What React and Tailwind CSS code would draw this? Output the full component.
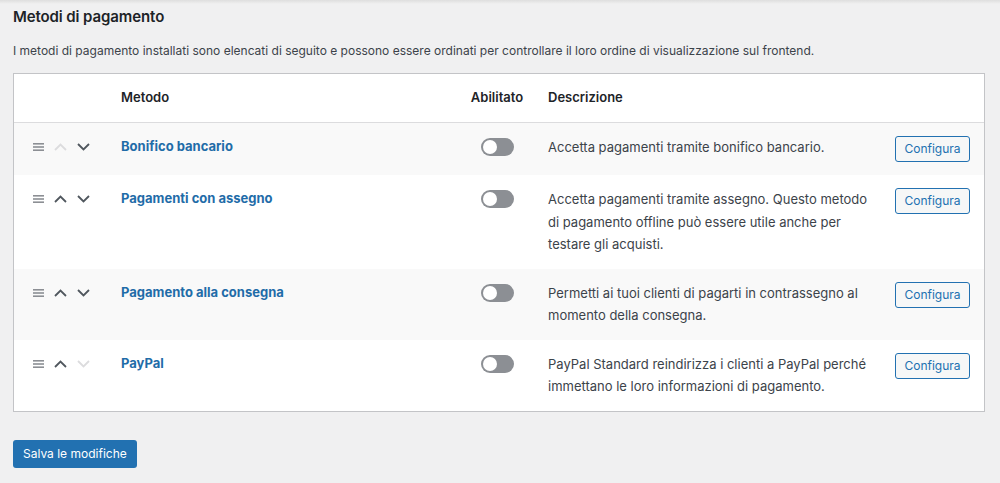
import React from 'react';

const methods = [
  {
    name: 'Bonifico bancario',
    desc: 'Accetta pagamenti tramite bonifico bancario.',
    up: false,
    down: true,
  },
  {
    name: 'Pagamenti con assegno',
    desc: 'Accetta pagamenti tramite assegno. Questo metodo di pagamento offline può essere utile anche per testare gli acquisti.',
    up: true,
    down: true,
  },
  {
    name: 'Pagamento alla consegna',
    desc: 'Permetti ai tuoi clienti di pagarti in contrassegno al momento della consegna.',
    up: true,
    down: true,
  },
  {
    name: 'PayPal',
    desc: 'PayPal Standard reindirizza i clienti a PayPal perché immettano le loro informazioni di pagamento.',
    up: true,
    down: false,
  },
];

const Handle = () => (
  <svg width="11" height="8" viewBox="0 0 11 8" className="block">
    <rect x="0" y="0" width="11" height="1.6" fill="#8c8f94" />
    <rect x="0" y="3.2" width="11" height="1.6" fill="#8c8f94" />
    <rect x="0" y="6.4" width="11" height="1.6" fill="#8c8f94" />
  </svg>
);

const Chevron = ({ dir, active }) => (
  <svg width="13" height="8" viewBox="0 0 13 8" className="block">
    <path
      d={dir === 'up' ? 'M1 7 L6.5 1.5 L12 7' : 'M1 1 L6.5 6.5 L12 1'}
      fill="none"
      stroke={active ? '#50575e' : '#dcdcde'}
      strokeWidth="1.8"
    />
  </svg>
);

const Toggle = () => (
  <div className="w-[33px] h-[18px] rounded-full bg-[#8c8f94] relative">
    <div className="absolute left-[2px] top-[2px] w-[14px] h-[14px] rounded-full bg-white" />
  </div>
);

const grid = 'grid grid-cols-[94px_351px_76px_347px_1fr]';

const App = () => {
  return (
    <div className="min-h-[483px] bg-[#f0f0f1] text-[#3c434a] text-[13px]" style={{ fontFamily: 'Inter, "Liberation Sans", Arial, sans-serif' }}>
      <div className="h-[4px] bg-gradient-to-b from-[#dedede] to-[#f0f0f1]" />
      <div className="px-[13px]">
        <h2 className="text-[15px] font-semibold text-[#1d2327] leading-[26px] tracking-[-0.1px]">Metodi di pagamento</h2>
        <p className="mt-[12px] leading-[18px] text-[12px]">
          I metodi di pagamento installati sono elencati di seguito e possono essere ordinati per controllare il loro ordine di visualizzazione sul frontend.
        </p>

        <div className="mt-[13px] w-[972px] border border-[#c3c4c7] bg-white">
          <div className={`${grid} h-[49px] items-center border-b border-[#dcdcde] font-semibold text-[#1d2327]`}>
            <div />
            <div className="pl-[13px]">Metodo</div>
            <div className="text-center">Abilitato</div>
            <div className="pl-[13px]">Descrizione</div>
            <div />
          </div>
          {methods.map((m, i) => (
            <div key={m.name} className={`${grid} py-[13px] ${i % 2 === 0 ? 'bg-[#f9f9f9]' : 'bg-white'}`}>
              <div className="flex items-center gap-[10px] pl-[19px] h-[22px]">
                <Handle />
                <Chevron dir="up" active={m.up} />
                <Chevron dir="down" active={m.down} />
              </div>
              <div className="pl-[13px] h-[22px] flex items-center">
                <a className="font-bold text-[#1f6ca8]">{m.name}</a>
              </div>
              <div className="flex justify-center h-[22px] items-center">
                <Toggle />
              </div>
              <div className="pl-[13px] pr-[10px] leading-[22.5px]">{m.desc}</div>
              <div className="pl-[13px]">
                <button className="h-[26px] w-[75px] border border-[#2271b1] bg-[#f6f7f7] text-[#2271b1] rounded-[3px] text-[12px]">
                  Configura
                </button>
              </div>
            </div>
          ))}
        </div>

        <button className="mt-[28px] h-[28px] px-[10px] bg-[#2271b1] text-white rounded-[3px] text-[12px]">
          Salva le modifiche
        </button>
      </div>
    </div>
  );
};

export default App;
